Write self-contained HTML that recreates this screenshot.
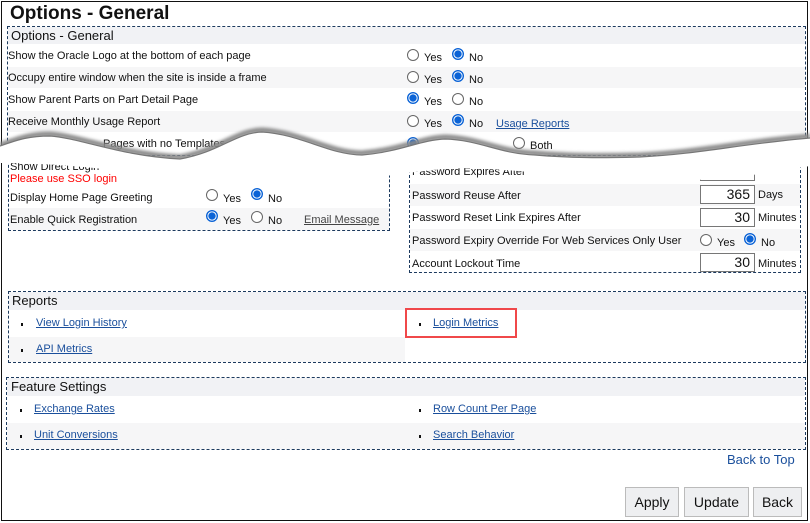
<!DOCTYPE html>
<html><head><style>
*{margin:0;padding:0;box-sizing:border-box}
body{width:810px;height:523px;background:#fff;font-family:"Liberation Sans",Arial,sans-serif;font-size:11px;color:#111;position:relative;overflow:hidden}
.a{position:absolute;white-space:nowrap}
.frame{position:absolute;left:1px;top:1px;width:807px;height:520px;border:1.5px solid #111}
.box{position:absolute;border:1px dashed #1c3a5e}
.bg{position:absolute;background:#f6f6f7}
.hd{position:absolute;background:#f1f2f5}
.r{position:absolute;width:12px;height:12px;border-radius:50%;border:1px solid #666;background:#fff}
.r.c{border:1px solid #0b63d6;background:radial-gradient(circle,#0b63d6 0 3.4px,#fff 3.9px 4.4px,#0b63d6 4.8px)}
a,.lk{color:#1a4f9c;text-decoration:underline}
.in{position:absolute;height:19px;border:1px solid #777;text-align:right;padding-right:4px;font-size:14px;line-height:17px;background:#fff}
.btn{position:absolute;height:30px;border:1px solid #bbb;background:#eeeff1;font-size:14px;line-height:28px;text-align:center;color:#111}
.bul{position:absolute;width:2px;height:3px;background:#111}
</style></head><body>
<div class="frame"></div>
<div class="a" style="left:10px;top:3px;font-size:19px;font-weight:bold">Options - General</div>
<div class="box" style="left:7px;top:26px;width:799px;height:130px"></div>
<div class="hd" style="left:8px;top:27px;width:797px;height:17px"></div>
<div class="a" style="left:11px;top:28px;font-size:13px">Options - General</div>
<div class="bg" style="left:8px;top:67px;width:797px;height:21px"></div>
<div class="bg" style="left:8px;top:111px;width:797px;height:21px"></div>
<div class="a" style="left:8px;top:50px">Show the Oracle Logo at the bottom of each page</div>
<div class="a" style="left:8px;top:72px">Occupy entire window when the site is inside a frame</div>
<div class="a" style="left:8px;top:94px">Show Parent Parts on Part Detail Page</div>
<div class="a" style="left:8px;top:116px">Receive Monthly Usage Report</div>
<div class="a" style="left:103px;top:138px">Pages with no Templates</div>

<div class="r" style="left:407px;top:49px"></div><div class="a" style="left:424px;top:52px">Yes</div>
<div class="r c" style="left:452px;top:48px"></div><div class="a" style="left:469px;top:52px">No</div>
<div class="r" style="left:407px;top:71px"></div><div class="a" style="left:424px;top:74px">Yes</div>
<div class="r c" style="left:452px;top:70px"></div><div class="a" style="left:469px;top:74px">No</div>
<div class="r c" style="left:407px;top:92px"></div><div class="a" style="left:424px;top:96px">Yes</div>
<div class="r" style="left:452px;top:93px"></div><div class="a" style="left:469px;top:96px">No</div>
<div class="r" style="left:407px;top:115px"></div><div class="a" style="left:424px;top:118px">Yes</div>
<div class="r c" style="left:452px;top:114px"></div><div class="a" style="left:469px;top:118px">No</div>
<div class="a lk" style="left:496px;top:118px">Usage Reports</div>
<div class="r c" style="left:407px;top:137px"></div>
<div class="r" style="left:513px;top:137px"></div><div class="a" style="left:530px;top:140px">Both</div>

<!-- lower left box -->
<div class="box" style="left:8px;top:160px;width:382px;height:71px"></div>
<div class="bg" style="left:9px;top:208px;width:380px;height:22px"></div>
<div class="a" style="left:10px;top:161px">Show Direct Login</div>
<div class="a" style="left:10px;top:173px;color:#f00">Please use SSO login</div>
<div class="a" style="left:10px;top:192px">Display Home Page Greeting</div>
<div class="a" style="left:10px;top:214px">Enable Quick Registration</div>
<div class="r" style="left:206px;top:165px"></div><div class="a" style="left:223px;top:168px">Yes</div>
<div class="r c" style="left:251px;top:164px"></div><div class="a" style="left:268px;top:168px">No</div>
<div class="r" style="left:206px;top:189px"></div><div class="a" style="left:223px;top:193px">Yes</div>
<div class="r c" style="left:251px;top:188px"></div><div class="a" style="left:268px;top:193px">No</div>
<div class="r c" style="left:206px;top:210px"></div><div class="a" style="left:223px;top:215px">Yes</div>
<div class="r" style="left:251px;top:211px"></div><div class="a" style="left:268px;top:215px">No</div>
<div class="a lk" style="left:304px;top:214px;color:#444">Email Message</div>

<!-- lower right box -->
<div class="box" style="left:409px;top:160px;width:392px;height:113px"></div>
<div class="bg" style="left:410px;top:184px;width:390px;height:22px"></div>
<div class="bg" style="left:410px;top:229px;width:390px;height:22px"></div>
<div class="a" style="left:412px;top:166px">Password Expires After</div>
<div class="a" style="left:412px;top:190px">Password Reuse After</div>
<div class="a" style="left:412px;top:212px">Password Reset Link Expires After</div>
<div class="a" style="left:412px;top:235px">Password Expiry Override For Web Services Only User</div>
<div class="a" style="left:412px;top:258px">Account Lockout Time</div>
<div class="in" style="left:700px;top:162px;width:55px"></div>
<div class="in" style="left:700px;top:185px;width:55px">365</div><div class="a" style="left:758px;top:189px">Days</div>
<div class="in" style="left:700px;top:208px;width:55px">30</div><div class="a" style="left:758px;top:212px">Minutes</div>
<div class="r" style="left:700px;top:234px"></div><div class="a" style="left:717px;top:237px">Yes</div>
<div class="r c" style="left:744px;top:233px"></div><div class="a" style="left:761px;top:237px">No</div>
<div class="in" style="left:700px;top:253px;width:55px">30</div><div class="a" style="left:758px;top:258px">Minutes</div>

<!-- tear -->
<svg class="a" style="left:0;top:0" width="810" height="200">
<defs><filter id="f" x="-5%" y="-50%" width="110%" height="200%"><feGaussianBlur stdDeviation="1.5"/></filter></defs>
<path d="M0,145 C20,138 30,134 50,134 C80,136 120,154 180,157 C220,150 235,131 262,130 C300,132 330,153 362,153 C400,150 420,138 445,137 C480,138 500,152 535,153 C570,156 600,156 640,155 C700,152 740,142 810,136" fill="none" stroke="#888" stroke-width="5" filter="url(#f)"/>
<path d="M0,146 C20,139 30,136 50,136 C80,138 120,156 180,159 C220,152 235,133 262,132 C300,134 330,155 362,155 C400,152 420,140 445,139 C480,140 500,154 535,155 C570,158 600,158 640,157 C700,154 740,144 810,138 L810,166 C740,178 700,182 640,180 C570,177 520,170 470,168 C420,168 380,180 320,182 C250,182 200,178 130,172 C80,166 40,163 0,163 Z" fill="#fff"/>
<path d="M0,146 C20,139 30,136 50,136 C80,138 120,156 180,159 C220,152 235,133 262,132 C300,134 330,155 362,155 C400,152 420,140 445,139 C480,140 500,154 535,155 C570,158 600,158 640,157 C700,154 740,144 810,138" fill="none" stroke="#777" stroke-width="1.2"/>
</svg>

<!-- Reports -->
<div class="box" style="left:8px;top:291px;width:798px;height:72px"></div>
<div class="hd" style="left:9px;top:292px;width:796px;height:18px"></div>
<div class="bg" style="left:9px;top:337px;width:396px;height:25px"></div>
<div class="a" style="left:12px;top:293px;font-size:13px">Reports</div>
<div class="bul" style="left:21px;top:323px"></div><div class="a lk" style="left:36px;top:317px">View Login History</div>
<div class="bul" style="left:21px;top:349px"></div><div class="a lk" style="left:36px;top:343px">API Metrics</div>
<div class="bul" style="left:419px;top:323px"></div><div class="a lk" style="left:433px;top:317px">Login Metrics</div>
<div class="a" style="left:405px;top:308px;width:112px;height:30px;border:2px solid #f0484a"></div>

<!-- Feature -->
<div class="box" style="left:6px;top:377px;width:800px;height:73px"></div>
<div class="hd" style="left:7px;top:378px;width:798px;height:18px"></div>
<div class="bg" style="left:7px;top:423px;width:798px;height:26px"></div>
<div class="a" style="left:11px;top:379px;font-size:13px">Feature Settings</div>
<div class="bul" style="left:20px;top:409px"></div><div class="a lk" style="left:34px;top:403px">Exchange Rates</div>
<div class="bul" style="left:20px;top:435px"></div><div class="a lk" style="left:34px;top:429px">Unit Conversions</div>
<div class="bul" style="left:419px;top:409px"></div><div class="a lk" style="left:433px;top:403px">Row Count Per Page</div>
<div class="bul" style="left:419px;top:435px"></div><div class="a lk" style="left:433px;top:429px">Search Behavior</div>

<div class="a" style="left:727px;top:452px;font-size:13px;color:#1a4f9c">Back to Top</div>
<div class="btn" style="left:625px;top:487px;width:54px">Apply</div>
<div class="btn" style="left:684px;top:487px;width:65px">Update</div>
<div class="btn" style="left:753px;top:487px;width:49px">Back</div>
</body></html>
